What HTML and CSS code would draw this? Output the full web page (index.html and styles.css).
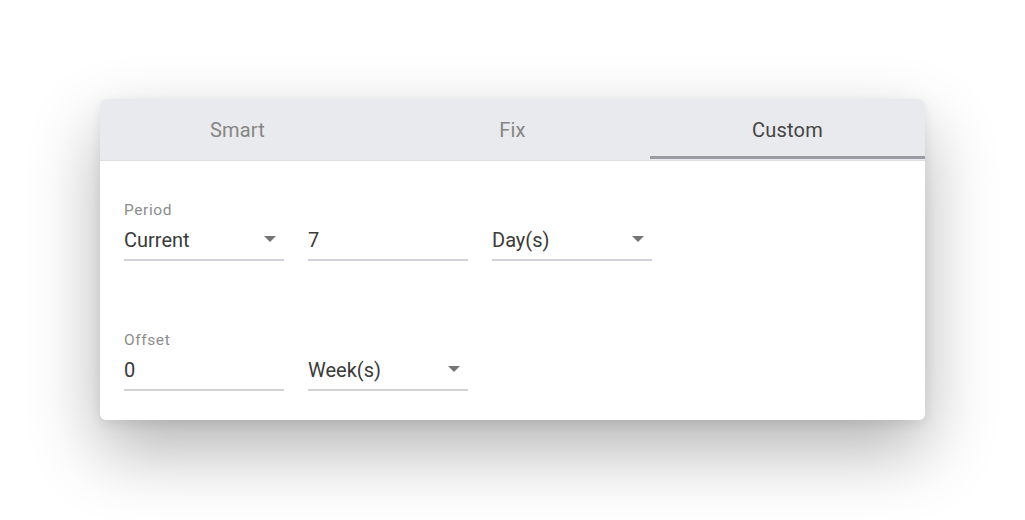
FILE: index.html
```html
<!DOCTYPE html>
<html lang="en">
<head>
  <meta charset="UTF-8" />
  <title>Period Picker</title>
  <link rel="stylesheet" href="styles.css">
</head>
<body>
  <div class="card">
    <div class="tabs">
      <div class="tab">Smart</div>
      <div class="tab">Fix</div>
      <div class="tab active">Custom</div>
    </div>
    <div class="content">
      <div class="row">
        <div class="field">
          <label>Period</label>
          <div class="value select">Current <span class="arrow"></span></div>
        </div>
        <div class="field">
          <label>&nbsp;</label>
          <div class="value">7</div>
        </div>
        <div class="field">
          <label>&nbsp;</label>
          <div class="value select">Day(s) <span class="arrow"></span></div>
        </div>
      </div>
      <div class="row">
        <div class="field">
          <label>Offset</label>
          <div class="value">0</div>
        </div>
        <div class="field">
          <label>&nbsp;</label>
          <div class="value select">Week(s) <span class="arrow"></span></div>
        </div>
      </div>
    </div>
  </div>
</body>
</html>
```

FILE: styles.css
```css
html, body {
  height: 100%;
}

body {
  margin: 0;
  padding: 99px 0 0;
  box-sizing: border-box;
  min-height: 520px;
  background: #fff;
  font-family: Roboto, 'Liberation Sans', sans-serif;
  color: #212121;
}

.card {
  width: 825px;
  margin: 0 auto;
  background: white;
  border-radius: 6px;
  overflow: hidden;
  box-shadow: 0 30px 70px rgba(0, 0, 0, 0.3), 0 4px 12px rgba(0, 0, 0, 0.08);
}

.tabs {
  display: flex;
  background: #e9eaed;
  border-bottom: 1px solid #dcdde1;
}

.tab {
  flex: 1;
  height: 61px;
  line-height: 62px;
  text-align: center;
  font-size: 20px;
  letter-spacing: 0.2px;
  color: #858585;
  box-sizing: border-box;
}

.tab.active {
  color: #444;
  border-bottom: 3px solid #9a9ba3;
  height: 60px;
}

.content {
  padding: 40px 24px 29px;
}

.row {
  display: flex;
  gap: 24px;
}

.row + .row {
  margin-top: 70px;
}

.field {
  width: 160px;
}

.field label {
  display: block;
  font-size: 15.5px;
  line-height: 18px;
  letter-spacing: 0.6px;
  color: #8c8c8c;
}

.value {
  position: relative;
  height: 40px;
  line-height: 43px;
  font-size: 20px;
  color: #3a3a3a;
  border-bottom: 2px solid #d2d2d8;
}

.arrow {
  position: absolute;
  right: 8px;
  top: 17px;
  width: 0;
  height: 0;
  border-left: 6px solid transparent;
  border-right: 6px solid transparent;
  border-top: 6px solid #757575;
}
```
